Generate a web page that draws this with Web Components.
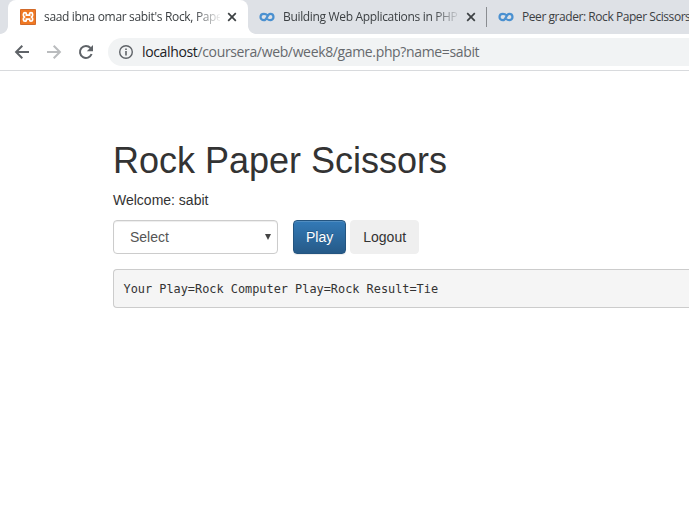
<!DOCTYPE html>
<html lang="en"><head><meta charset="utf-8"><title>Rock Paper Scissors</title>
<style>html,body{margin:0;height:100%;overflow:hidden;background:#fff}</style></head>
<body><game-window></game-window>
<script>
const define=(name,html)=>customElements.define(name,class extends HTMLElement{
  constructor(){super();this.attachShadow({mode:'open'}).innerHTML=html;}
});

define('xampp-icon',`<style>:host{display:block;width:16px;height:16px}svg{display:block}</style>
<svg width="16" height="16" viewBox="0 0 16 16"><rect width="16" height="16" rx="1" fill="#f07822"/><rect x=".5" y=".5" width="15" height="15" rx="1" fill="none" stroke="#cf6a2c"/>
<path d="M6.4 6.2V5.2Q6.4 3.7 5 3.7T3.4 5.2V6.2Q3.4 7.1 4.4 8Q3.4 8.8 3.4 9.8V10.8Q3.4 12.2 5 12.2T6.4 10.8V10.2H9.6V10.8Q9.6 12.2 11 12.2T12.6 10.8V9.8Q12.6 8.8 11.6 8Q12.6 7.1 12.6 6.2V5.2Q12.6 3.7 11 3.7T9.6 5.2V6.2Z" fill="none" stroke="#fff" stroke-width="1.7"/></svg>`);

define('coursera-icon',`<style>:host{display:block;width:16px;height:16px}svg{display:block}</style>
<svg width="16" height="16" viewBox="0 0 16 16"><path d="M8.2 6.1C7.5 5.2 6.2 4.8 4.9 4.8C2.8 4.8 1.5 6.2 1.5 8S2.8 11.2 4.9 11.2C8.4 11.2 7.8 4.8 11.2 4.8C13.2 4.8 14.5 6.2 14.5 8S13.2 11.2 11.2 11.2C9.9 11.2 8.9 10.7 8.2 9.9" fill="none" stroke="#4a90d0" stroke-width="2.2"/></svg>`);

define('close-icon',`<style>:host{display:block;width:10px;height:10px}svg{display:block}</style>
<svg width="10" height="10" viewBox="0 0 10 10"><path d="M1.2 1.2L8.8 8.8M8.8 1.2L1.2 8.8" stroke="#3c4043" stroke-width="1.7"/></svg>`);

customElements.define('browser-tab',class extends HTMLElement{
  constructor(){super();this.attachShadow({mode:'open'}).innerHTML=`<style>
:host{display:flex;box-sizing:border-box;flex:none;width:239px;height:34px;padding-left:12px;align-items:center;font:12px/34px "Open Sans","Noto Sans",sans-serif;color:#3c4043;position:relative}
:host([active]){width:240px;background:#fff;border-radius:8px 8px 0 0}
:host([active])::before,:host([active])::after{content:"";position:absolute;bottom:0;width:8px;height:8px}
:host([active])::before{left:-8px;background:radial-gradient(circle at 0 0,transparent 7.5px,#fff 8.2px)}
:host([active])::after{right:-8px;background:radial-gradient(circle at 100% 0,transparent 7.5px,#fff 8.2px)}
.title{margin-left:8px;width:176px;overflow:hidden;white-space:nowrap;letter-spacing:var(--tracking,-.33px);-webkit-mask-image:linear-gradient(90deg,#000 150px,transparent 178px)}
:host([wide]) .title{-webkit-mask-image:none;width:190px}
close-icon{margin-left:7px}</style>
<slot name="icon"></slot><span class="title"><slot></slot></span>${this.hasAttribute('wide')?'':'<close-icon></close-icon>'}`;}
});

define('tab-strip',`<style>:host{display:flex;height:34px;background:#dee1e6;padding-left:8px;overflow:hidden}
.divider{flex:none;width:1px;height:20px;margin:7px 0;background:#8a8d91}
browser-tab[wide]{padding-left:11px}</style>
<browser-tab active style="--tracking:-.33px"><xampp-icon slot="icon"></xampp-icon>saad ibna omar sabit's Rock, Paper, Scissors</browser-tab>
<browser-tab style="width:238px;padding-left:11px"><coursera-icon slot="icon"></coursera-icon>Building Web Applications in PHP</browser-tab>
<span class="divider"></span>
<browser-tab wide style="--tracking:-.44px"><coursera-icon slot="icon"></coursera-icon>Peer grader: Rock Paper Scissors</browser-tab>`);

define('address-toolbar',`<style>
:host{display:flex;box-sizing:border-box;height:37px;border-bottom:1px solid #d8dadd;padding:4px 0 4px 14px;align-items:center;background:#fff;font:14px/28px "Open Sans","Noto Sans",sans-serif}
svg{display:block;flex:none}.nav{display:flex;gap:16px;width:94px}
.omnibox{flex:1;height:28px;box-sizing:border-box;padding-left:10px;display:flex;align-items:center;background:#f1f3f4;border-radius:14px 0 0 14px;color:#66696d;white-space:nowrap}
.url{margin-left:8px;letter-spacing:-.355px}b{font-weight:400;color:#202124}</style>
<div class="nav"><svg width="16" height="16" viewBox="0 0 16 16"><path d="M15 8H2.5M8.3 1.8L2.1 8L8.3 14.2" fill="none" stroke="#5f6368" stroke-width="2"/></svg>
<svg width="16" height="16" viewBox="0 0 16 16"><path d="M1 8H13.5M7.7 1.8L13.9 8L7.7 14.2" fill="none" stroke="#babcbe" stroke-width="2"/></svg>
<svg width="16" height="16" viewBox="0 0 16 16"><path d="M13.6 10A6 6 0 1 1 12.5 4" fill="none" stroke="#5f6368" stroke-width="2"/><path d="M15 1V7.2H8.8Z" fill="#5f6368"/></svg></div>
<div class="omnibox"><svg width="16" height="16" viewBox="0 0 16 16"><circle cx="8" cy="8" r="6.3" fill="none" stroke="#5f6368" stroke-width="1.4"/><path d="M8 7.1V11.4M8 4.4V6" stroke="#5f6368" stroke-width="1.6"/></svg><span class="url"><b>localhost</b>/coursera/web/week8/game.php?name=sabit</span></div>`);

define('choice-select',`<style>
:host{display:flex;box-sizing:border-box;width:165px;height:34px;padding:0 6px 0 16px;border:1px solid #ccc;border-radius:4px;box-shadow:inset 0 1px 1px rgba(0,0,0,.075);align-items:center;justify-content:space-between;color:#555}
svg{display:block}</style><slot></slot><svg width="6" height="6" viewBox="0 0 6 6"><path d="M0 0H6L3 6Z" fill="#444"/></svg>`);

define('action-button',`<style>
:host{display:block;box-sizing:border-box;height:34px;border:1px solid #efefef;border-radius:4px;padding:6px 12px;background:#efefef;color:#333}
:host([primary]){color:#fff;border-color:#245580;background:linear-gradient(#337ab7,#265a88);text-shadow:0 -1px 0 rgba(0,0,0,.2);box-shadow:inset 0 1px 0 rgba(255,255,255,.15),0 1px 1px rgba(0,0,0,.075)}</style><slot></slot>`);

define('result-panel',`<style>
:host{display:block;box-sizing:border-box;height:39px;margin-top:15px;padding:9.5px;border:1px solid #ccc;border-right:0;border-radius:4px 0 0 4px;background:#f5f5f5;color:#333;font:11.88px/18.6px "DejaVu Sans Mono","Liberation Mono",monospace;white-space:pre}</style><slot></slot>`);

define('game-page',`<style>
:host{display:block;padding:70px 0 0 113px;color:#333;font:14px/20px "Liberation Sans",Arial,sans-serif}
h1{font-size:36px;line-height:40px;font-weight:400;margin:0 0 9px}
p{margin:0 0 10px}.controls{display:flex}
action-button[primary]{margin:0 4px 0 15px}</style>
<h1>Rock Paper Scissors</h1><p>Welcome: sabit</p>
<div class="controls"><choice-select>Select</choice-select><action-button primary>Play</action-button><action-button>Logout</action-button></div>
<result-panel>Your Play=Rock Computer Play=Rock Result=Tie</result-panel>`);

define('game-window',`<style>:host{display:block;width:689px;height:519px;overflow:hidden;background:#fff}</style>
<tab-strip></tab-strip><address-toolbar></address-toolbar><game-page></game-page>`);
</script></body></html>
